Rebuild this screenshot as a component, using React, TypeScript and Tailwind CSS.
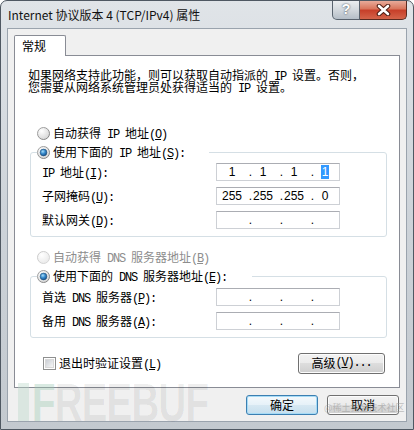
import React from 'react';

// SimSun-like half-width latin run
function M({ children }: { children: React.ReactNode }) {
  return <span className="font-['Liberation_Mono'] leading-[0] tracking-[-1.2px]">{children}</span>;
}

function Key({ k, tail = '' }: { k: string; tail?: string }) {
  return (
    <M>
      (<span className="underline underline-offset-[1px]">{k}</span>){tail}
    </M>
  );
}

function Radio({ id, checked, disabled }: { id: string; checked?: boolean; disabled?: boolean }) {
  return (
    <svg width="13" height="13" viewBox="0 0 13 13" className="shrink-0">
      <defs>
        <linearGradient id={`ring-${id}`} x1="0" y1="0" x2="1" y2="1">
          <stop offset="0" stopColor={disabled ? '#c8c8c8' : '#a9a9a9'} />
          <stop offset="1" stopColor={disabled ? '#d8d8d8' : '#7c7c7c'} />
        </linearGradient>
        <radialGradient id={`fill-${id}`} cx="0.35" cy="0.3" r="0.8">
          <stop offset="0" stopColor="#ffffff" />
          <stop offset="1" stopColor={disabled ? '#e8e8e8' : '#d2d2d2'} />
        </radialGradient>
        <radialGradient id={`dot-${id}`} cx="0.4" cy="0.35" r="0.7">
          <stop offset="0" stopColor="#a9ddf8" />
          <stop offset="0.45" stopColor="#3c8fd0" />
          <stop offset="1" stopColor="#0e4a87" />
        </radialGradient>
      </defs>
      <circle cx="6.5" cy="6.5" r="6" fill={`url(#fill-${id})`} stroke={`url(#ring-${id})`} strokeWidth="1" />
      {checked && <circle cx="6.5" cy="6.5" r="3.4" fill={`url(#dot-${id})`} stroke="#24507a" strokeWidth="0.6" />}
    </svg>
  );
}

function Checkbox() {
  return (
    <div className="flex h-[13px] w-[13px] shrink-0 items-center justify-center border border-[#8e8f8f] bg-white">
      <div className="h-[9px] w-[9px] border border-[#d8d8d8] bg-linear-to-br from-[#cbcfd5] to-[#f6f6f6]" />
    </div>
  );
}

function IpBox({ parts, selectLast }: { parts: string[]; selectLast?: boolean }) {
  return (
    <div className="flex h-[18px] w-[124px] items-center border border-[#cdd0d5] border-t-[#abadb3] bg-white pl-[4px] font-['Liberation_Sans'] text-[12px] leading-[14px] text-black">
      {parts.map((p, i) => (
        <React.Fragment key={i}>
          <span className="w-[22px] text-center">
            {selectLast && i === 3 ? <span className="bg-[#3399ff] px-[1px] text-white">{p}</span> : p}
          </span>
          {i < 3 && <span className="w-[9px] text-right">.</span>}
        </React.Fragment>
      ))}
    </div>
  );
}

function Row({ label, parts, selectLast }: { label: React.ReactNode; parts: string[]; selectLast?: boolean }) {
  return (
    <div className="flex h-[18px] items-center pl-[11px]">
      <span className="w-[174px]">{label}</span>
      <IpBox parts={parts} selectLast={selectLast} />
    </div>
  );
}

function WinButton({ children, primary, w }: { children: React.ReactNode; primary?: boolean; w: string }) {
  return (
    <div
      className={`flex items-center justify-center rounded-[3px] border text-[12px] leading-[14px] ${w} ${
        primary
          ? 'h-[20px] border-[#3c7fb1] bg-[linear-gradient(#f4f9fc_0%,#e6f1f8_50%,#d7e8f2_50%,#c6dfee_100%)] shadow-[inset_0_0_0_1px_#a6dbf6]'
          : 'border-[#707070] bg-[linear-gradient(#f2f2f2_0%,#ebebeb_50%,#dddddd_50%,#cfcfcf_100%)] shadow-[inset_0_0_0_1px_#fcfcfc]'
      }`}
    >
      {children}
    </div>
  );
}

const empty = ['', '', '', ''];

export default function App() {
  return (
    <div className="relative h-[430px] w-[414px] overflow-hidden rounded-t-[7px] border border-[#4f5862] bg-linear-to-b from-[#e0e4e8] via-[#cdd3d9] to-[#c3c9cf] font-['Noto_Sans_CJK_SC'] text-black">
      {/* title bar */}
      <div className="flex h-[27px] items-start">
        <span className="mt-[6px] pl-[7px] text-[12px] leading-[16px] text-[#111]">
          Internet 协议版本 4 (TCP/IPv4) 属性
        </span>
        <div className="-mt-px ml-auto mr-[6px] flex">
          <div className="flex h-[20px] w-[28px] items-center justify-center rounded-bl-[5px] border border-t-0 border-[#59636e] bg-linear-to-b from-[#eef0f2] via-[#d4d9de] to-[#b5bec7] font-['Liberation_Sans'] text-[14px] font-bold text-white [text-shadow:0_0_2px_#2b3540]">
            ?
          </div>
          <div className="flex h-[20px] w-[47px] items-center justify-center rounded-br-[5px] border border-l-0 border-t-0 border-[#5a2a20] bg-[linear-gradient(#eab2a2_0%,#d9775e_45%,#c7402a_55%,#d4644a_100%)]">
            <svg width="15" height="12" viewBox="0 0 15 12">
              <path d="M3 2 L12 10 M12 2 L3 10" stroke="#4a1c12" strokeWidth="4.6" strokeLinecap="round" />
              <path d="M3 2 L12 10 M12 2 L3 10" stroke="#ffffff" strokeWidth="2.6" strokeLinecap="round" />
            </svg>
          </div>
        </div>
      </div>

      {/* client area */}
      <div className="ml-[6px] h-[394px] w-[400px] border border-[#9aa3ad] bg-[#f0f0f0]">
        <div className="flex pl-[6px] pt-[6px]">
          <div className="relative z-10 -mb-px h-[21px] w-[52px] rounded-t-[2px] border border-b-0 border-[#898c95] bg-white pl-[7px] pt-[3px] text-[12px] leading-[14px]">
            常规
          </div>
        </div>
        <div className="ml-[6px] h-[333px] w-[386px] border border-[#898c95] bg-white text-[12px] leading-[14px]">
          <div className="pl-[13px] pt-[13px]">
            <div className="h-[12px] leading-[12px]">
              如果网络支持此功能，则可以获取自动指派的<M> IP </M>设置。否则，
            </div>
            <div className="h-[12px] leading-[12px]">
              您需要从网络系统管理员处获得适当的<M> IP </M>设置。
            </div>
          </div>

          <div className="mt-[32px] flex h-[16px] items-center gap-[3px] pl-[22px]">
            <Radio id="a" />
            <span>
              自动获得<M> IP </M>地址<Key k="O" />
            </span>
          </div>

          <div className="ml-[15px] mt-[11px] w-[357px] rounded-[3px] border border-[#d5dfe5] pb-[7px]">
            <div className="-mt-[9px] ml-[6px] flex h-[16px] w-fit items-center gap-[3px] bg-white pr-[24px]">
              <Radio id="b" checked />
              <span>
                使用下面的<M> IP </M>地址<Key k="S" tail=":" />
              </span>
            </div>
            <div className="mt-[3px] flex flex-col gap-[6px]">
              <Row label={<><M>IP </M>地址<Key k="I" tail=":" /></>} parts={['1', '1', '1', '1']} selectLast />
              <Row label={<>子网掩码<Key k="U" tail=":" /></>} parts={['255', '255', '255', '0']} />
              <Row label={<>默认网关<Key k="D" tail=":" /></>} parts={empty} />
            </div>
          </div>

          <div className="mt-[12px] flex h-[16px] items-center gap-[3px] pl-[22px] text-[#8d8d8d]">
            <Radio id="c" disabled />
            <span>
              自动获得<M> DNS </M>服务器地址<Key k="B" />
            </span>
          </div>

          <div className="ml-[15px] mt-[11px] w-[357px] rounded-[3px] border border-[#d5dfe5] pb-[7px]">
            <div className="-mt-[9px] ml-[6px] flex h-[16px] w-fit items-center gap-[3px] bg-white pr-[25px]">
              <Radio id="d" checked />
              <span>
                使用下面的<M> DNS </M>服务器地址<Key k="E" tail=":" />
              </span>
            </div>
            <div className="mt-[4px] flex flex-col gap-[6px]">
              <Row label={<>首选<M> DNS </M>服务器<Key k="P" tail=":" /></>} parts={empty} />
              <Row label={<>备用<M> DNS </M>服务器<Key k="A" tail=":" /></>} parts={empty} />
            </div>
          </div>

          <div className="mt-[14px] flex h-[22px] items-center pl-[28px]">
            <Checkbox />
            <span className="ml-[3px]">
              退出时验证设置<Key k="L" />
            </span>
            <div className="ml-auto mr-[14px]">
              <WinButton w="h-[21px] w-[87px]">
                高级<Key k="V" tail="..." />
              </WinButton>
            </div>
          </div>
        </div>

        <div className="mt-[7px] flex justify-end gap-[9px] pr-[7px]">
          <WinButton primary w="w-[72px]">
            确定
          </WinButton>
          <WinButton w="h-[20px] w-[72px]">取消</WinButton>
        </div>
      </div>

      {/* watermarks */}
      <div className="pointer-events-none absolute left-[17px] top-[381px] flex h-[40px] items-start">
        <div className="mt-[1px] h-[38px] w-[11px] bg-[#b9d8c8]/40" />
        <span className="ml-[3px] origin-left scale-x-[0.71] font-['Liberation_Sans'] text-[54px] font-bold leading-[40px] tracking-[-1px] text-black/[0.07]">
          <span className="text-[#9cc9b2]/40">F</span>REEBUF
        </span>
      </div>
      <div className="pointer-events-none absolute left-[323px] top-[401px] text-[9px] leading-[11px] text-[#9a9a9a]/60">
        @稀土掘金技术社区
      </div>
    </div>
  );
}
